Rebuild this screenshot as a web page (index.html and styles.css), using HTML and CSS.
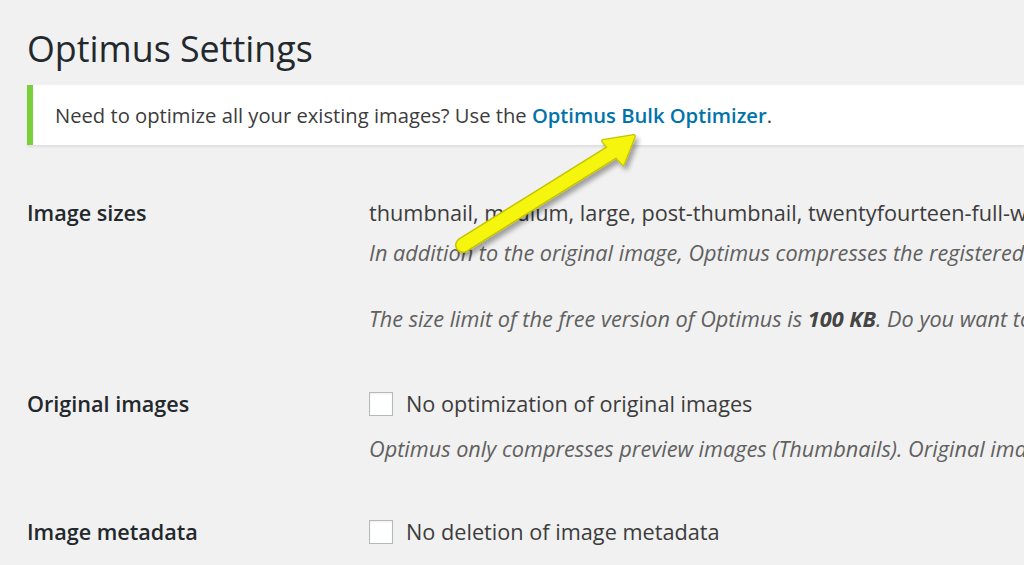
FILE: index.html
```html
<!DOCTYPE html>
<html lang="en">
<head>
<meta charset="utf-8">
<title>Optimus Settings</title>
<link rel="stylesheet" href="styles.css">
</head>
<body>
<div class="wrap">
  <h1 class="title">Optimus Settings</h1>
  <div class="notice">
    <p>Need to optimize all your existing images? Use the <a href="#" class="link">Optimus Bulk Optimizer</a>.</p>
  </div>
  <div class="form">
    <div class="row">
      <div class="label">Image sizes</div>
      <div class="field">
        <div class="line">thumbnail, medium, large, post-thumbnail, twentyfourteen-full-width, full</div>
        <p class="description">In addition to the original image, Optimus compresses the registered image sizes.<br><br>The size limit of the free version of Optimus is <strong>100 KB</strong>. Do you want to optimize larger images?</p>
      </div>
    </div>
    <div class="row">
      <div class="label">Original images</div>
      <div class="field">
        <label class="line check"><span class="box"></span>No optimization of original images</label>
        <p class="description desc-check">Optimus only compresses preview images (Thumbnails). Original images remain untouched.</p>
      </div>
    </div>
    <div class="row row-last">
      <div class="label">Image metadata</div>
      <div class="field">
        <label class="line check"><span class="box"></span>No deletion of image metadata</label>
      </div>
    </div>
  </div>
</div>
<svg class="arrow" width="1024" height="565" viewBox="0 0 1024 565" aria-hidden="true">
  <defs>
    <filter id="sh" x="-20%" y="-20%" width="140%" height="140%">
      <feGaussianBlur in="SourceAlpha" stdDeviation="2.5"/>
      <feOffset dx="3" dy="4" result="b"/>
      <feComponentTransfer><feFuncA type="linear" slope="0.35"/></feComponentTransfer>
      <feMerge><feMergeNode/><feMergeNode in="SourceGraphic"/></feMerge>
    </filter>
  </defs>
  <g filter="url(#sh)">
    <line x1="463" y1="245" x2="614" y2="151" stroke="#c4c400" stroke-width="16" stroke-linecap="round"/>
    <polygon points="634,136 603,141 623,164" fill="#c4c400" stroke="#c4c400" stroke-width="4" stroke-linejoin="round"/>
    <line x1="463" y1="245" x2="614" y2="151" stroke="#f5f50a" stroke-width="13" stroke-linecap="round"/>
    <polygon points="634,136 603,141 623,164" fill="#f5f50a" stroke="#f5f50a" stroke-width="1.5" stroke-linejoin="round"/>
  </g>
</svg>
</body>
</html>
```

FILE: styles.css
```css
html, body {
  margin: 0;
  padding: 0;
  width: 1024px;
  height: 565px;
  overflow: hidden;
  background: #f1f1f1;
}
body {
  position: relative;
  font-family: "Open Sans", "Noto Sans", sans-serif;
  color: #444;
  font-size: 21.7px;
}
.wrap {
  padding-left: 27px;
  white-space: nowrap;
}
.title {
  margin: 24px 0 0;
  font-size: 35.8px;
  font-weight: 400;
  line-height: 48px;
  color: #23282d;
}
.notice {
  margin-top: 13px;
  height: 60px;
  background: #fff;
  border-left: 6px solid #7ad03a;
  box-shadow: 0 2px 2px rgba(0,0,0,0.08);
  display: flex;
  align-items: center;
  padding-left: 22px;
}
.notice p {
  margin: 0;
  font-size: 20.2px;
  line-height: 33px;
  color: #3c3c3c;
}
.link {
  color: #0073aa;
  font-weight: 600;
  text-decoration: none;
}
.form {
  margin-top: 25px;
}
.row {
  display: grid;
  grid-template-columns: 342px 1fr;
  padding: 26px 0 26px;
}
.row-last {
  padding-top: 24px;
}
.label {
  font-size: 21.6px;
  font-weight: 600;
  line-height: 33px;
  color: #23282d;
}
.field {
  min-width: 0;
}
.line {
  display: flex;
  align-items: center;
  line-height: 33px;
  height: 33px;
  color: #3c3c3c;
}
.check {
  font-size: 21.7px;
}
.description {
  margin: 7px 0 0;
  font-size: 21.7px;
  font-style: italic;
  line-height: 33px;
  color: #606060;
}
.description strong {
  font-weight: 700;
  color: #444;
}
.desc-check {
  margin-top: 12px;
}
.box {
  width: 22px;
  height: 22px;
  border: 1px solid #b4b9be;
  background: #fff;
  box-shadow: inset 0 1px 2px rgba(0,0,0,0.07);
  margin-right: 13px;
  flex: none;
}
.arrow {
  position: absolute;
  left: 0;
  top: 0;
  pointer-events: none;
}
```
